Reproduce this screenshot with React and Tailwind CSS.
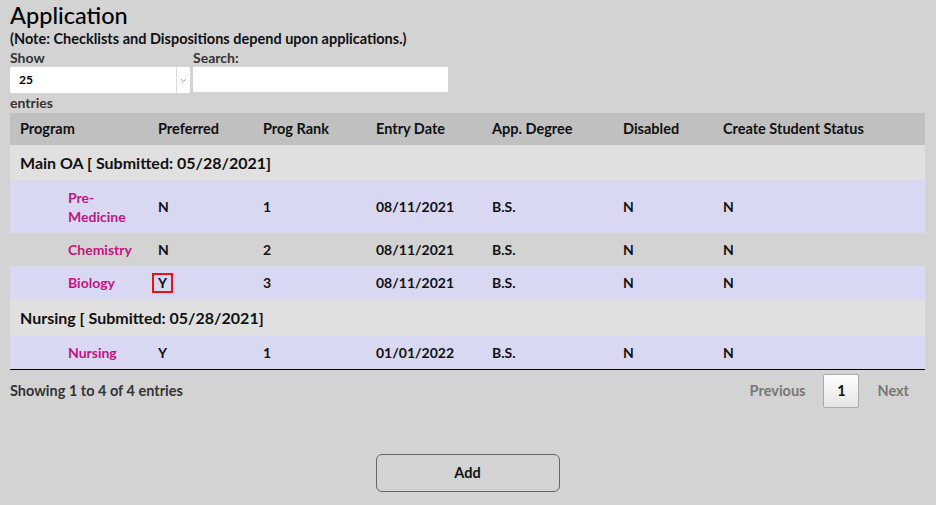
const rows = [
  { group: 'Main OA [ Submitted: 05/28/2021]', h: 'h-[35px]' },
  { program: 'Pre-Medicine', pref: 'N', rank: '1', date: '08/11/2021', degree: 'B.S.', disabled: 'N', status: 'N', odd: true, h: 'h-[53px]' },
  { program: 'Chemistry', pref: 'N', rank: '2', date: '08/11/2021', degree: 'B.S.', disabled: 'N', status: 'N', odd: false },
  { program: 'Biology', pref: 'Y', rank: '3', date: '08/11/2021', degree: 'B.S.', disabled: 'N', status: 'N', odd: true, focus: true },
  { group: 'Nursing [ Submitted: 05/28/2021]', h: 'h-[37px]' },
  { program: 'Nursing', pref: 'Y', rank: '1', date: '01/01/2022', degree: 'B.S.', disabled: 'N', status: 'N', odd: true },
]

const headers = [
  { label: 'Program', w: 'w-[138px]' },
  { label: 'Preferred', w: 'w-[105px]' },
  { label: 'Prog Rank', w: 'w-[113px]' },
  { label: 'Entry Date', w: 'w-[116px]' },
  { label: 'App. Degree', w: 'w-[131px]' },
  { label: 'Disabled', w: 'w-[100px]' },
  { label: 'Create Student Status', w: '' },
]

export default function App() {
  return (
    <div className="w-[936px] h-[505px] bg-[#d3d3d3] text-[#111] px-[10px] pt-0 overflow-hidden" style={{ fontFamily: 'Lato, "Noto Sans", sans-serif' }}>
      <h1 className="text-[23.5px] leading-[30px] font-medium text-black">Application</h1>
      <p className="text-[14.5px] leading-[18px] font-bold">(Note: Checklists and Dispositions depend upon applications.)</p>

      <div className="flex gap-[3px] mt-[1px]">
        <div className="flex flex-col">
          <span className="text-[14px] leading-[17px] font-bold text-[#333]">Show</span>
          <div className="mt-[1px] w-[180px] h-[26px] bg-white flex items-center">
            <span className="flex-1 pl-[9px] text-[12px] font-bold text-black">25</span>
            <span className="w-[14px] h-full border-l border-[#ddd] flex items-center justify-center">
              <svg width="7" height="5" viewBox="0 0 7 5"><path d="M1 1l2.5 2.5L6 1" fill="none" stroke="#aaa" strokeWidth="1" /></svg>
            </span>
          </div>
        </div>
        <div className="flex flex-col">
          <span className="text-[14px] leading-[17px] font-bold text-[#333]">Search:</span>
          <div className="mt-[1px] w-[255px] h-[25px] bg-white" />
        </div>
      </div>
      <p className="text-[14px] leading-[18px] font-bold text-[#333] mt-[1px]">entries</p>

      <table className="w-[915px] border-collapse mt-[1px] text-[14px] font-bold">
        <thead>
          <tr className="bg-[#c0c0c0] h-[32px]">
            {headers.map((h) => (
              <th key={h.label} className={`${h.w} text-left text-[14.5px] font-bold pl-[10px] align-middle`}>{h.label}</th>
            ))}
          </tr>
        </thead>
        <tbody>
          {rows.map((r, i) =>
            r.group ? (
              <tr key={i} className={`bg-[#e0e0e0] ${r.h}`}>
                <td colSpan={7} className="pl-[10px] text-[16px]">{r.group}</td>
              </tr>
            ) : (
              <tr key={i} className={`${r.odd ? 'bg-[#d9d8f3]' : 'bg-[#d3d3d3]'} ${r.h || 'h-[33px]'} ${i === rows.length - 1 ? 'border-b border-black' : ''}`}>
                <td className="pl-[58px] pr-[10px] py-[7px] leading-[19px] text-[#c8127f]">{r.program}</td>
                <td className="pl-[10px]">
                  {r.focus ? (
                    <span className="-ml-[6px] inline-block border-2 border-[#ee1111] px-[4px] leading-[16px]">{r.pref}</span>
                  ) : r.pref}
                </td>
                <td className="pl-[10px]">{r.rank}</td>
                <td className="pl-[10px]">{r.date}</td>
                <td className="pl-[10px]">{r.degree}</td>
                <td className="pl-[10px]">{r.disabled}</td>
                <td className="pl-[10px]">{r.status}</td>
              </tr>
            )
          )}
        </tbody>
      </table>

      <div className="w-[915px] flex items-center justify-between mt-[4px]">
        <span className="text-[14.5px] font-bold text-[#333]">Showing 1 to 4 of 4 entries</span>
        <div className="flex items-center text-[14.5px] font-bold">
          <span className="text-[#777] mr-[18px]">Previous</span>
          <span className="w-[36px] h-[34px] flex items-center justify-center border border-[#aaa] rounded-[2px] bg-gradient-to-b from-white to-[#e4e4e4] text-[#111]">1</span>
          <span className="text-[#777] ml-[18px] mr-[16px]">Next</span>
        </div>
      </div>

      <div className="flex justify-center w-[915px] mt-[46px]">
        <button className="w-[184px] h-[38px] border border-[#666] rounded-[6px] text-[14.5px] font-bold text-[#111]">Add</button>
      </div>
    </div>
  )
}
